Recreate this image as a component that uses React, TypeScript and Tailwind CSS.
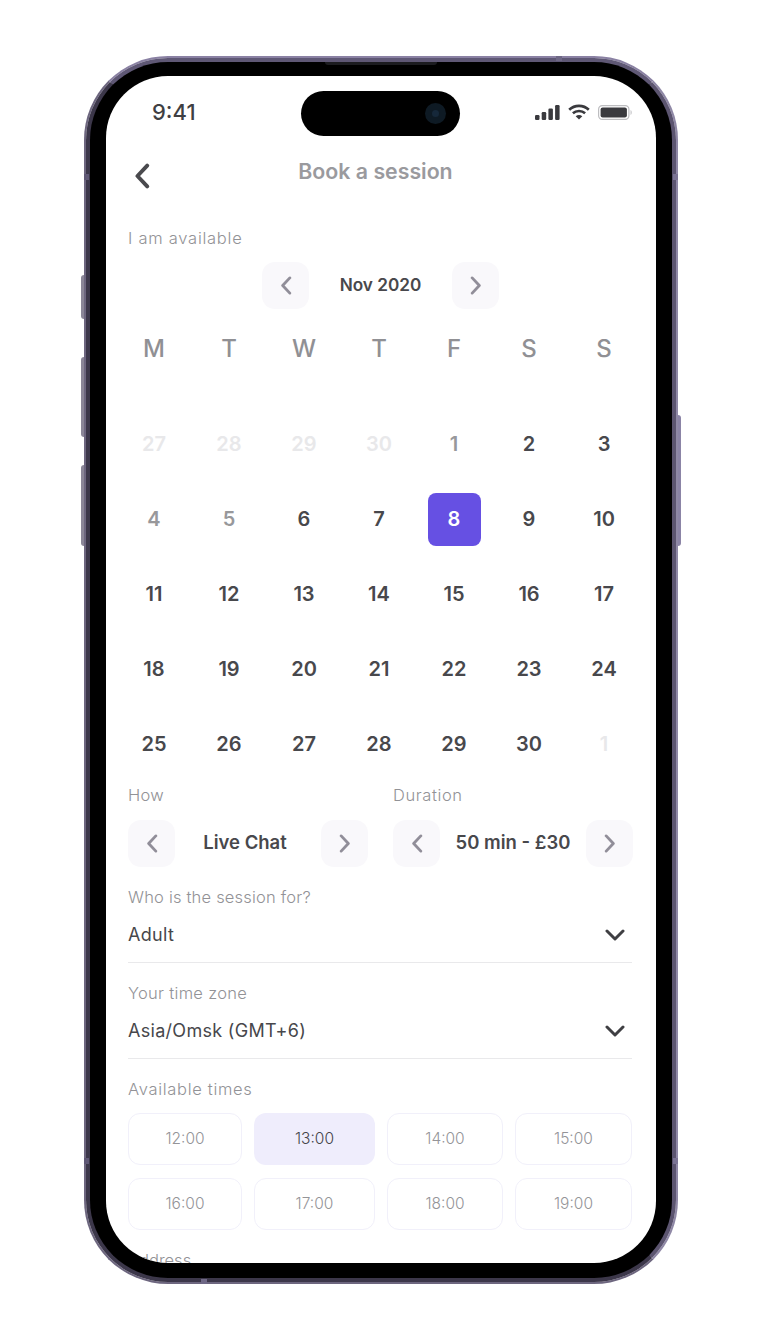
const font = { fontFamily: 'Inter, "Liberation Sans", sans-serif' };

function Chevron({ dir, className }: { dir: "left" | "right"; className: string }) {
  return (
    <svg viewBox="0 0 12 20" fill="none" className={className}>
      <path
        d={dir === "left" ? "M10 2 L2.5 10 L10 18" : "M2 2 L9.5 10 L2 18"}
        stroke="currentColor"
        strokeWidth="3"
        strokeLinecap="round"
        strokeLinejoin="round"
      />
    </svg>
  );
}

function NavButton({ dir }: { dir: "left" | "right" }) {
  return (
    <button className="flex h-[47px] w-[47px] shrink-0 items-center justify-center rounded-[13px] bg-[#f9f8fb] text-[#918e99]">
      <Chevron dir={dir} className="h-[19px] w-[12px]" />
    </button>
  );
}

function Label({ children, className = "" }: { children: React.ReactNode; className?: string }) {
  return <div className={`flex h-5 items-center text-[16.5px] font-light whitespace-nowrap text-[#929296] ${className}`}>{children}</div>;
}

function DropChevron() {
  return (
    <svg viewBox="0 0 20 14" fill="none" className="mr-[7px] mt-[2px] h-[14px] w-[20px]">
      <path d="M2 3 L10 11 L18 3" stroke="#3f3f43" strokeWidth="3" strokeLinecap="round" strokeLinejoin="round" />
    </svg>
  );
}

function Select({ value }: { value: string }) {
  return (
    <div className="mt-[15px] flex h-6 items-center justify-between text-[18px] font-normal tracking-[0.3px] text-[#47474b]">
      <span>{value}</span>
      <DropChevron />
    </div>
  );
}

const days: [string, string][] = [
  ["27", "f"], ["28", "f"], ["29", "f"], ["30", "f"], ["1", "g"], ["2", "d"], ["3", "d"],
  ["4", "g"], ["5", "g"], ["6", "d"], ["7", "d"], ["8", "s"], ["9", "d"], ["10", "d"],
  ["11", "d"], ["12", "d"], ["13", "d"], ["14", "d"], ["15", "d"], ["16", "d"], ["17", "d"],
  ["18", "d"], ["19", "d"], ["20", "d"], ["21", "d"], ["22", "d"], ["23", "d"], ["24", "d"],
  ["25", "d"], ["26", "d"], ["27", "d"], ["28", "d"], ["29", "d"], ["30", "d"], ["1", "f"],
];

const dayColor: Record<string, string> = {
  f: "text-[#e8e8ea]",
  g: "text-[#98989b]",
  d: "text-[#48484c]",
};

const times = ["12:00", "13:00", "14:00", "15:00", "16:00", "17:00", "18:00", "19:00"];

export default function App() {
  return (
    <div className="min-h-[1337px] bg-white pl-[84px] pt-[56px]" style={font}>
      <div className="relative h-[1228px] w-[594px]">
        {/* side buttons */}
        <div className="absolute -left-[3px] top-[219px] h-[44px] w-[3px] rounded-l-sm bg-[#8b8698]" />
        <div className="absolute -left-[3px] top-[301px] h-[80px] w-[3px] rounded-l-sm bg-[#8b8698]" />
        <div className="absolute -left-[3px] top-[409px] h-[81px] w-[3px] rounded-l-sm bg-[#8b8698]" />
        <div className="absolute -right-[3px] top-[359px] h-[131px] w-[3px] rounded-r-sm bg-[#8b84a6]" />

        {/* frame */}
        <div className="h-full w-full rounded-[84px] border-2 border-[#6d667f] border-t-[#8a81a3] border-r-[#8f88a6]">
          <div className="h-full w-full rounded-[82px] border-4 border-[#3c374a] border-t-[#5f5875] border-r-[#5c5570] bg-black pb-[15px] pl-[16px] pr-[16px] pt-[14px]">
            <div className="relative h-full w-full overflow-hidden rounded-[62px] bg-white pl-[22px] pr-[24px]">
              {/* dynamic island */}
              <div className="absolute left-[195px] top-[15px] flex h-[45px] w-[159px] items-center justify-end rounded-full bg-black pr-[14px]">
                <div className="flex h-[21px] w-[21px] items-center justify-center rounded-full bg-[#0e1a24]">
                  <div className="h-[7px] w-[7px] rounded-full bg-[#16283a]" />
                </div>
              </div>

              {/* status bar */}
              <div className="relative flex h-[72px] items-center justify-between">
                <span className="ml-[24px] text-[22px] font-medium text-[#3f3f43]">9:41</span>
                <div className="flex items-center">
                  <svg viewBox="0 0 25 15" className="h-[15px] w-[25px]" fill="#3a3a3e">
                    <rect x="0" y="10" width="4.5" height="5" rx="1.2" />
                    <rect x="6.7" y="7" width="4.5" height="8" rx="1.2" />
                    <rect x="13.4" y="3.5" width="4.5" height="11.5" rx="1.2" />
                    <rect x="20.1" y="0" width="4.5" height="15" rx="1.2" />
                  </svg>
                  <svg viewBox="0 0 22 16" className="ml-[8px] h-[16px] w-[22px]" fill="none" stroke="#3a3a3e" strokeWidth="2.6">
                    <path d="M1.2 5.8 C6.5 0.6 15.5 0.6 20.8 5.8" />
                    <path d="M4.9 9.2 C8.2 6.2 13.8 6.2 17.1 9.2" />
                    <path d="M11 15.4 L7.7 12.2 C9.6 10.6 12.4 10.6 14.3 12.2 Z" fill="#3a3a3e" stroke="none" />
                  </svg>
                  <svg viewBox="0 0 34 15" className="ml-[8px] h-[15px] w-[34px]" fill="none">
                    <rect x="0.6" y="0.6" width="30.3" height="13.8" rx="3.6" stroke="#bdbdc0" strokeWidth="1.2" />
                    <rect x="2.6" y="2.6" width="26.3" height="9.8" rx="2" fill="#3a3a3e" />
                    <path d="M32.5 5 C33.5 5.4 33.8 6.4 33.8 7.5 C33.8 8.6 33.5 9.6 32.5 10 Z" fill="#c8c8cb" />
                  </svg>
                </div>
              </div>

              {/* header */}
              <div className="flex h-12 items-center">
                <Chevron dir="left" className="ml-[6px] mt-2 h-[26px] w-[16px] shrink-0 text-[#4a4a4e]" />
                <div className="flex-1 pr-[31px] text-center text-[21.3px] font-semibold text-[#9a9a9e]">Book a session</div>
              </div>

              <Label className="mt-8 tracking-[0.74px]">I am available</Label>

              <div className="mt-[14px] flex items-center pl-[134px]">
                <NavButton dir="left" />
                <div className="w-[143px] pb-[2px] text-center text-[17.2px] font-semibold text-[#48484c]">Nov 2020</div>
                <NavButton dir="right" />
              </div>

              <div className="-ml-[11.5px] mt-[22px] grid h-9 w-[525px] grid-cols-7 items-center text-center text-[24px] font-medium text-[#909094]">
                {["M", "T", "W", "T", "F", "S", "S"].map((d, i) => (
                  <div key={i}>{d}</div>
                ))}
              </div>

              <div className="-ml-[11.5px] mt-[39px] grid w-[525px] grid-cols-7 auto-rows-[75px]">
                {days.map(([d, k], i) => (
                  <div key={i} className="flex items-center justify-center text-[20px] font-semibold">
                    {k === "s" ? (
                      <div className="flex h-[53px] w-[53px] translate-y-px items-center justify-center rounded-lg bg-[#6650e3] text-white">
                        <span className="-translate-y-px">{d}</span>
                      </div>
                    ) : (
                      <span className={dayColor[k]}>{d}</span>
                    )}
                  </div>
                ))}
              </div>

              <div className="mt-1 grid grid-cols-[240px_240px] gap-x-[25px]">
                <div>
                  <Label className="tracking-[0.3px]">How</Label>
                  <div className="mt-[15px] flex h-[46px] items-center justify-between">
                    <NavButton dir="left" />
                    <span className="pr-[6px] text-[18.5px] font-semibold text-[#48484c]">Live Chat</span>
                    <NavButton dir="right" />
                  </div>
                </div>
                <div>
                  <Label className="tracking-[0.6px]">Duration</Label>
                  <div className="mt-[15px] flex h-[46px] items-center justify-between">
                    <NavButton dir="left" />
                    <span className="text-[18.5px] font-semibold text-[#48484c]">50 min - £30</span>
                    <NavButton dir="right" />
                  </div>
                </div>
              </div>

              <Label className="mt-[21px] tracking-[0.2px]">Who is the session for?</Label>
              <Select value="Adult" />
              <div className="mt-4 h-px bg-[#e9e9eb]" />

              <Label className="mt-5 tracking-[0.3px]">Your time zone</Label>
              <Select value="Asia/Omsk (GMT+6)" />
              <div className="mt-4 h-px bg-[#e9e9eb]" />

              <Label className="mt-5 tracking-[0.7px]">Available times</Label>
              <div className="mt-[14px] grid grid-cols-[114px_121px_116px_117px] gap-x-3 gap-y-[13px]">
                {times.map((t) => (
                  <div
                    key={t}
                    className={
                      t === "13:00"
                        ? "flex h-[52px] items-center justify-center rounded-xl bg-[#efedfc] text-[15.5px] font-light text-[#45454b]"
                        : "flex h-[52px] items-center justify-center rounded-xl border border-[#f1f0fa] text-[15.5px] font-light text-[#949498]"
                    }
                  >
                    {t}
                  </div>
                ))}
              </div>

              <Label className="mt-5">Address</Label>
            </div>
          </div>
        </div>

        {/* frame details */}
        <div className="absolute left-[241px] top-[6px] h-[3px] w-[112px] rounded-b bg-[#1c1c20]" />
        <div className="absolute left-[472px] top-0 h-[5px] w-[6px] bg-[#6f6886]" />
        <div className="absolute bottom-0 left-[117px] h-[5px] w-[6px] bg-[#6f6886]" />
        <div className="absolute left-0 top-[118px] h-[6px] w-[5px] bg-[#5f5875]" />
        <div className="absolute right-0 top-[118px] h-[6px] w-[5px] bg-[#7b7494]" />
        <div className="absolute bottom-[120px] left-0 h-[6px] w-[5px] bg-[#5f5875]" />
        <div className="absolute bottom-[120px] right-0 h-[6px] w-[5px] bg-[#7b7494]" />
      </div>
    </div>
  );
}
